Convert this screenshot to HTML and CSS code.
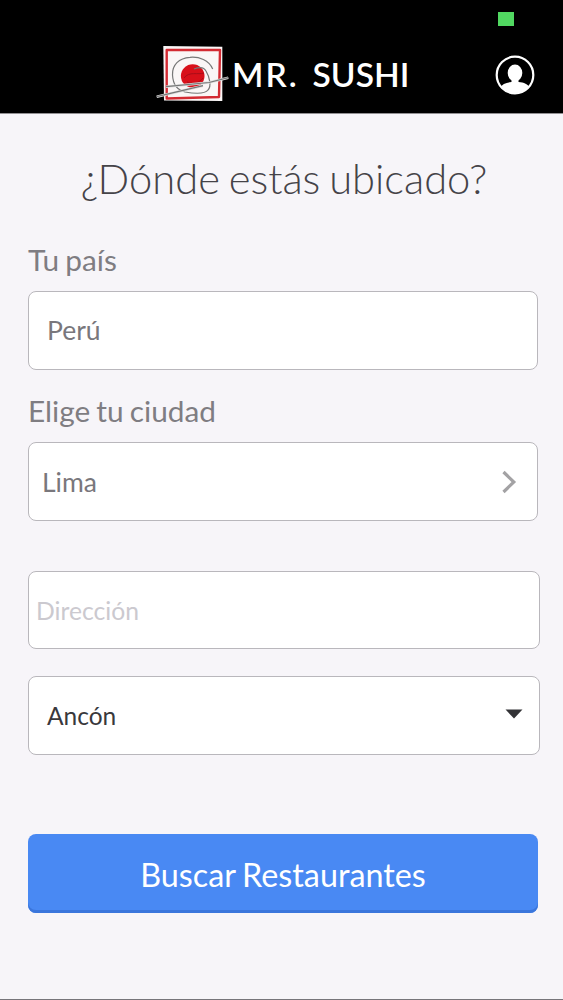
FILE: index.html
```html
<!DOCTYPE html>
<html lang="es">
<head>
<meta charset="utf-8">
<title>Mr. Sushi</title>
<link rel="stylesheet" href="styles.css">
</head>
<body>
<div class="screen">
  <header class="header">
    <div class="status"><span class="status-dot"></span></div>
    <div class="bar">
      <div class="brand">
        <svg class="logo" width="76" height="60" viewBox="0 0 76 60">
          <path d="M8.300 1L67.300 1.700L67.300 56L9 55.500Z" fill="#faf6f6"/>
          <path d="M11.700 5L65 5L64 52L11.700 53.500Z" fill="none" stroke="#d32a32" stroke-width="2.400" stroke-linejoin="round"/>
          <circle cx="37.700" cy="31" r="11.800" fill="#d8101a"/>
          <path d="M29 33C34 26 43 30 49 28M32 37C38 40 44 38 48 33" fill="none" stroke="#a90d18" stroke-width="1"/>
          <path d="M57.700 24C54 15 44 11.500 35 12.300C24 13 17 20 17.500 30C18 40 22 45 30 47C39 48.500 50 49 53 45C57 41 54 31 51 26C49 22 44 22 39 24" fill="none" stroke="#777" stroke-width="1.200"/>
          <path d="M11 41.700L54 37.500L73.300 32.700M1.700 51.700L48 40.700" fill="none" stroke="#ddd" stroke-width="2.600"/>
          <path d="M11 41.700L54 37.500L73.300 32.700M1.700 51.700L48 40.700" fill="none" stroke="#777" stroke-width="1.200"/>
        </svg>
        <span class="brand-name"><span class="mr">MR.</span> <span class="sushi">SUSHI</span></span>
      </div>
      <svg class="user" width="40" height="40" viewBox="0 0 40 40">
        <defs><clipPath id="ring"><circle cx="20" cy="20" r="18"/></clipPath></defs>
        <g clip-path="url(#ring)" fill="#fff">
          <ellipse cx="20" cy="18" rx="7.300" ry="8.500"/>
          <path d="M16.500 23H23.500V27C29 27.500 33 29 35 33V40H5V33C7 29 11 27.500 16.500 27Z"/>
        </g>
        <circle cx="20" cy="20" r="18.300" fill="none" stroke="#fff" stroke-width="2.200"/>
      </svg>
    </div>
  </header>
  <main class="form">
    <h1 class="title">¿Dónde estás ubicado?</h1>
    <div class="label">Tu país</div>
    <div class="field country"><span>Perú</span></div>
    <div class="label city-label">Elige tu ciudad</div>
    <div class="field city"><span>Lima</span>
      <svg width="16" height="24" viewBox="0 0 16 24"><path d="M2.500 2L12.800 12L2.500 22" fill="none" stroke="#a3a2a4" stroke-width="3.200"/></svg>
    </div>
    <div class="field address"><span>Dirección</span></div>
    <div class="field district"><span>Ancón</span>
      <svg width="18" height="12" viewBox="0 0 18 12"><path d="M0.500 0.500H17.500L9 9.500Z" fill="#333336"/></svg>
    </div>
    <div class="button">Buscar Restaurantes</div>
  </main>
</div>
</body>
</html>
```
FILE: styles.css
```css
* { box-sizing: border-box; }
body { margin: 0; font-family: Lato, sans-serif; }
.screen { width: 563px; height: 1000px; background: #f7f5f9; border-bottom: 1px solid #77757a; overflow: hidden; }
.header { height: 114px; background: #000; border-bottom: 1px solid #929093; }
.status { height: 43px; padding: 12px 49px 0 0; display: flex; justify-content: flex-end; }
.status-dot { width: 16px; height: 14px; background: #51d861; }
.bar { height: 64px; padding: 0 28px 0 155px; display: flex; justify-content: space-between; align-items: center; }
.brand { display: flex; align-items: center; }
.logo { display: block; }
.brand-name { display: flex; gap: 14px; padding: 0 0 3px 1px; font-size: 33.5px; font-weight: 600; line-height: 56px; color: #fff; white-space: nowrap; }
.mr { letter-spacing: 2px; }
.sushi { letter-spacing: 0; }
.user { display: block; }
.form { padding: 0 23px 0 28px; }
.title { margin: 0; height: 126px; line-height: 128px; font-size: 41.7px; font-weight: 300; word-spacing: -2.5px; color: #454348; text-align: center; white-space: nowrap; }
.label { height: 38px; line-height: 39px; margin-bottom: 13px; font-size: 29.8px; word-spacing: -1.5px; color: #7f7d82; }
.city-label { margin-top: 21px; }
.field { height: 79px; display: flex; align-items: center; justify-content: space-between; background: #fff; border: 1px solid #b9b7bc; border-radius: 8px; color: #79777c; }
.country, .city { margin-right: 2px; font-size: 26.5px; }
.country { padding: 0 18px 1px; }
.city { padding: 1px 20px 0 13px; }
.address { height: 78px; margin-top: 50px; padding-left: 7px; font-size: 24.7px; color: #cbc9cf; }
.district { height: 79px; margin-top: 27px; padding: 0 16px 1px 18px; font-size: 24.5px; color: #39383c; }
.button { height: 79px; margin: 79px 2px 0 0; line-height: 81px; background: #4989f3; border-radius: 8px; box-shadow: inset 0 -3px #3b76dc; color: #fff; font-size: 32.3px; word-spacing: -1.5px; text-align: center; }
```
